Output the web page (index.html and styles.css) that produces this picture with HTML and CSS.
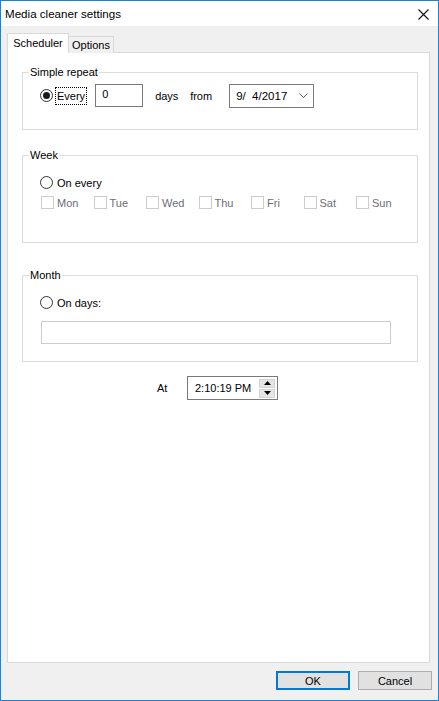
FILE: index.html
```html
<!DOCTYPE html>
<html>
<head>
<meta charset="utf-8">
<title>Media cleaner settings</title>
<link rel="stylesheet" href="styles.css">
</head>
<body>
<div class="window">
  <div class="titlebar">
    <span class="title">Media cleaner settings</span>
    <svg class="close" width="11" height="11" viewBox="0 0 11 11"><path d="M0.5 0.5 L10.5 10.5 M10.5 0.5 L0.5 10.5" stroke="#111" stroke-width="1.1" fill="none"/></svg>
  </div>
  <div class="tabs">
    <div class="tab active">Scheduler</div>
    <div class="tab">Options</div>
  </div>
  <div class="panel">
    <fieldset class="group g1">
      <legend>Simple repeat</legend>
      <div class="gbody b1">
        <div class="row">
          <span class="radio checked"></span>
          <span class="focus">Every</span>
          <span class="input num">0</span>
          <span class="lbl days">days</span>
          <span class="lbl from">from</span>
          <span class="input date"><span class="dtext">9/  4/2017</span>
            <svg class="chev" width="9" height="5" viewBox="0 0 9 5"><path d="M0.5 0.5 L4.5 4.5 L8.5 0.5" stroke="#444" stroke-width="0.9" fill="none"/></svg>
          </span>
        </div>
      </div>
    </fieldset>
    <fieldset class="group g2">
      <legend>Week</legend>
      <div class="gbody b2">
        <div class="rrow"><span class="radio"></span><span class="rtext">On every</span></div>
        <div class="days-grid">
          <div class="cb"><span class="box"></span><span class="cbl">Mon</span></div>
          <div class="cb"><span class="box"></span><span class="cbl">Tue</span></div>
          <div class="cb"><span class="box"></span><span class="cbl">Wed</span></div>
          <div class="cb"><span class="box"></span><span class="cbl">Thu</span></div>
          <div class="cb"><span class="box"></span><span class="cbl">Fri</span></div>
          <div class="cb"><span class="box"></span><span class="cbl">Sat</span></div>
          <div class="cb"><span class="box"></span><span class="cbl">Sun</span></div>
        </div>
      </div>
    </fieldset>
    <fieldset class="group g3">
      <legend>Month</legend>
      <div class="gbody b3">
        <div class="rrow"><span class="radio"></span><span class="rtext">On days:</span></div>
        <div class="field"></div>
      </div>
    </fieldset>
    <div class="atrow">
      <span class="atlbl">At</span>
      <span class="input time"><span class="ttext">2:10:19 PM</span>
        <span class="spin">
          <span class="sbtn"><svg width="7" height="4" viewBox="0 0 7 4"><path d="M0 4 L3.5 0 L7 4 Z" fill="#000"/></svg></span>
          <span class="sbtn"><svg width="7" height="4" viewBox="0 0 7 4"><path d="M0 0 L7 0 L3.5 4 Z" fill="#000"/></svg></span>
        </span>
      </span>
    </div>
  </div>
  <div class="footer">
    <div class="btn default">OK</div>
    <div class="btn">Cancel</div>
  </div>
</div>
</body>
</html>
```
FILE: styles.css
```css
* { box-sizing: border-box; }
html, body { margin: 0; padding: 0; background: #ffffff; }
body {
  font-family: "Liberation Sans", Arial, sans-serif;
  font-size: 11px;
  color: #000;
}
.window {
  width: 439px;
  height: 701px;
  border: 1px solid #1883d7;
  background: #f0f0f0;
  display: flex;
  flex-direction: column;
}
.titlebar {
  height: 25px;
  background: #fff;
  display: flex;
  align-items: center;
  justify-content: space-between;
  padding-left: 4px;
  padding-right: 9px;
  flex: none;
}
.title { font-size: 11.6px; }
.close { display: block; margin-top: 1px; }
.tabs {
  display: flex;
  align-items: flex-end;
  margin: 7px 0 -1px 6px;
  height: 20px;
  flex: none;
  position: relative;
  z-index: 1;
}
.tab {
  border: 1px solid #d9d9d9;
  border-bottom: none;
  height: 17px;
  line-height: 17px;
  width: 46px;
  text-align: center;
  background: #f0f0f0;
  margin-left: -1px;
}
.tab.active {
  height: 20px;
  width: 62px;
  background: #fff;
  line-height: 18px;
  margin-left: 0;
  position: relative;
  z-index: 2;
}
.panel {
  flex: 1;
  margin: 0 8px 0 6px;
  background: #fff;
  border: 1px solid #d9d9d9;
  display: flex;
  flex-direction: column;
}
.group {
  margin: 0 11px 0 14px;
  padding: 0;
  border: 1px solid #dcdcdc;
  min-width: 0;
}
.group legend {
  margin-left: 6px;
  padding: 0 1px;
  line-height: 14px;
  height: 14px;
}
.g1 { margin-top: 12px; }
.g2 { margin-top: 18px; }
.g3 { margin-top: 25px; }
.gbody { padding-left: 17px; }
.b1 { padding-top: 5px; padding-bottom: 22px; }
.b2 { padding-top: 13px; padding-bottom: 33px; }
.b3 { padding-top: 13px; padding-bottom: 17px; }
.row {
  display: flex;
  align-items: center;
  height: 23px;
}
.radio {
  width: 13px;
  height: 13px;
  border: 1px solid #333;
  border-radius: 50%;
  background: #fff;
  display: flex;
  align-items: center;
  justify-content: center;
  flex: none;
}
.radio.checked::after {
  content: "";
  width: 7px;
  height: 7px;
  border-radius: 50%;
  background: #1a1a1a;
}
.focus {
  margin-left: 2px;
  border: 1px dotted #000;
  padding: 1px 1px;
  line-height: 14px;
}
.input {
  border: 1px solid #7a7a7a;
  background: #fff;
  display: flex;
  align-items: center;
}
.num {
  margin-left: 8px;
  width: 48px;
  height: 23px;
  padding-left: 6px;
  align-items: flex-start;
  padding-top: 3px;
}
.lbl { display: inline-block; }
.days { width: 35px; margin-left: 12px; }
.from { width: 39px; }
.date {
  width: 85px;
  height: 24px;
  padding-left: 6px;
  justify-content: space-between;
  padding-right: 5px;
}
.dtext { white-space: pre; font-size: 11.5px; }
.chev { display: block; }
.rrow {
  display: flex;
  align-items: center;
  height: 15px;
}
.rtext { margin-left: 4px; }
.days-grid {
  display: grid;
  grid-template-columns: repeat(7, 52.5px);
  margin-top: 6px;
  margin-left: 1px;
}
.cb {
  display: flex;
  align-items: center;
  height: 13px;
}
.box {
  width: 13px;
  height: 13px;
  border: 1px solid #cccccc;
  background: #fff;
  flex: none;
}
.cbl { margin-left: 3px; color: #6d6d78; }
.field {
  margin-top: 11px;
  margin-left: 1px;
  width: 350px;
  height: 23px;
  border: 1px solid #cccccc;
}
.atrow {
  display: flex;
  align-items: center;
  margin-top: 14px;
  margin-left: 149px;
  height: 24px;
}
.atlbl { width: 30px; }
.time {
  width: 91px;
  height: 24px;
  padding-left: 7px;
  justify-content: space-between;
  padding-right: 2px;
}
.spin {
  display: flex;
  flex-direction: column;
  gap: 1px;
  width: 16px;
}
.sbtn {
  height: 9px;
  background: #e5e5e5;
  border: 1px solid #d4d4d4;
  display: flex;
  align-items: center;
  justify-content: center;
}
.sbtn svg { display: block; }
.footer {
  height: 37px;
  flex: none;
  display: flex;
  justify-content: flex-end;
  gap: 8px;
  padding: 8px 6px 0 0;
}
.btn {
  width: 74px;
  height: 19px;
  background: #e1e1e1;
  border: 1px solid #adadad;
  display: flex;
  align-items: center;
  justify-content: center;
}
.btn.default { border: 2px solid #0078d7; }
```
